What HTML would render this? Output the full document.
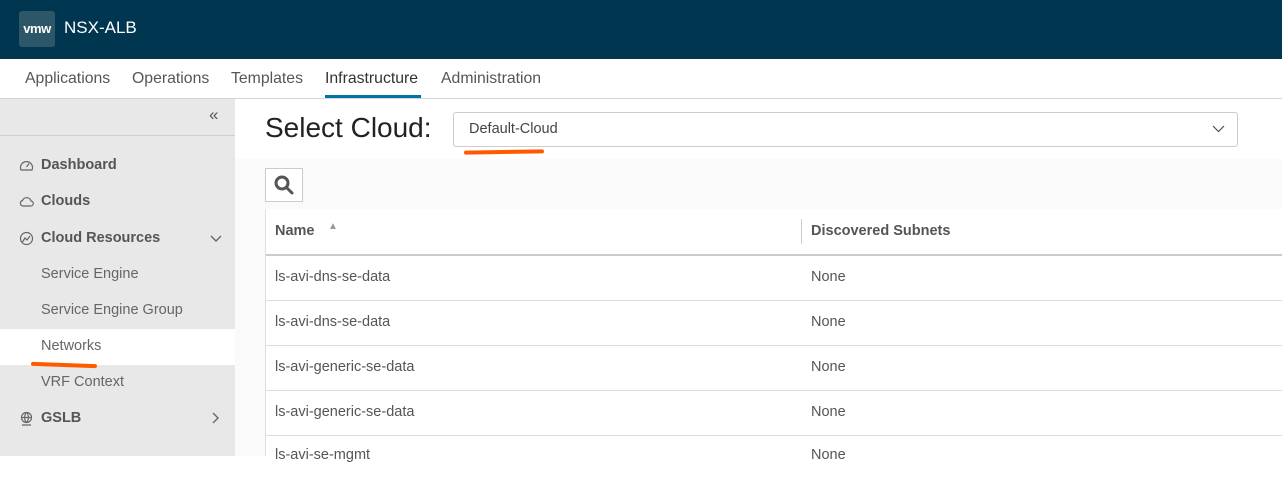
<!DOCTYPE html>
<html><head><style>
*{margin:0;padding:0;box-sizing:border-box}
body{width:1282px;height:456px;overflow:hidden;font-family:"Liberation Sans",sans-serif;background:#fff;position:relative}
.a{position:absolute}
.hdr{left:0;top:0;width:1282px;height:59px;background:#00364f}
.logo{left:19px;top:11px;width:36px;height:36px;background:#2c5769;border-radius:3px;color:#fff;font-weight:bold;font-size:13px;line-height:36px;text-align:center;letter-spacing:-0.5px}
.nav{top:59px;height:40px;left:0;width:1282px;border-bottom:1px solid #cfd6d9}
.nav span{position:absolute;top:11px;font-size:15.8px;color:#565656}
.side{left:0;top:99px;width:235px;height:357px;background:#e8e8e8}
.si{position:absolute;left:41px;font-size:14.5px;color:#666}
.sb{font-weight:bold;color:#555}
.main{left:235px;top:159px;width:1047px;height:297px;background:#fafafa}
.tbl{left:265px;top:209px;width:1017px;height:247px;background:#fff;border-left:1px solid #e0e0e0}
.row{position:absolute;left:0;width:1017px;border-bottom:1px solid #dcdcdc}
.row span{position:absolute;top:13px;font-size:14.5px;color:#555}
</style></head><body>
<div class="a hdr"></div>
<div class="a logo">vmw</div>
<div class="a" style="left:64px;top:18px;color:#fff;font-size:17px">NSX-ALB</div>
<div class="a nav">
<span style="left:25px">Applications</span>
<span style="left:132px">Operations</span>
<span style="left:231px">Templates</span>
<span style="left:325px;color:#333">Infrastructure</span>
<span style="left:441px">Administration</span>
<div style="position:absolute;left:325px;top:36px;width:96px;height:3px;background:#0072a3"></div>
</div>
<div class="a side">
<div style="position:absolute;left:0;top:36px;width:235px;height:1px;background:#cfcfcf"></div>
<div style="position:absolute;left:209px;top:6px;font-size:17px;color:#555">«</div>
<div style="position:absolute;left:0;top:230px;width:235px;height:36px;background:#fff"></div>
<svg style="position:absolute;left:19px;top:59px" width="15" height="15" viewBox="0 0 15 15" fill="none" stroke="#666" stroke-width="1.2"><path d="M2 12A6 6 0 1 1 13 12Z"/><path d="M7.5 9L10 5.5"/></svg>
<span class="si sb" style="top:58px">Dashboard</span>
<svg style="position:absolute;left:19px;top:95px" width="15" height="14" viewBox="0 0 15 14" fill="none" stroke="#666" stroke-width="1.2"><path d="M4 12H11.5A2.5 2.5 0 0 0 12 7A4.5 4.5 0 0 0 3.5 6.5A2.8 2.8 0 0 0 4 12Z"/></svg>
<span class="si sb" style="top:94px">Clouds</span>
<svg style="position:absolute;left:19px;top:132px" width="15" height="15" viewBox="0 0 15 15" fill="none" stroke="#666" stroke-width="1.2"><circle cx="7.5" cy="7.5" r="6"/><path d="M3.5 11L6 7L8 9L11 5"/></svg>
<span class="si sb" style="top:131px">Cloud Resources</span>
<svg style="position:absolute;left:210px;top:136px" width="12" height="8" viewBox="0 0 12 8" fill="none" stroke="#666" stroke-width="1.4"><path d="M1 1L6 6L11 1"/></svg>
<span class="si" style="top:167px">Service Engine</span>
<span class="si" style="top:203px">Service Engine Group</span>
<span class="si" style="top:239px">Networks</span>
<span class="si" style="top:275px">VRF Context</span>
<svg style="position:absolute;left:19px;top:312px" width="15" height="15" viewBox="0 0 15 15" fill="none" stroke="#666" stroke-width="1.2"><circle cx="7.5" cy="6.5" r="5"/><path d="M3 6.5H12M7.5 1.5C5 4 5 9 7.5 11.5M7.5 1.5C10 4 10 9 7.5 11.5M3 14H12"/></svg>
<span class="si sb" style="top:311px">GSLB</span>
<svg style="position:absolute;left:212px;top:313px" width="8" height="12" viewBox="0 0 8 12" fill="none" stroke="#666" stroke-width="1.4"><path d="M1 1L6 6L1 11"/></svg>
<div style="position:absolute;left:31px;top:264px;width:66px;height:4px;background:#ff5a00;border-radius:2px;transform:rotate(2deg)"></div>
</div>
<div class="a" style="left:265px;top:112px;font-size:28px;color:#222">Select Cloud:</div>
<div class="a" style="left:453px;top:112px;width:785px;height:35px;border:1px solid #ccc;border-radius:3px;background:#fff"></div>
<div class="a" style="left:469px;top:121px;font-size:14.5px;color:#444">Default-Cloud</div>
<svg class="a" style="left:1212px;top:125px" width="13" height="8" viewBox="0 0 13 8" fill="none" stroke="#555" stroke-width="1.2"><path d="M1 1L6.5 6.5L12 1"/></svg>
<div class="a" style="left:464px;top:150px;width:80px;height:4px;background:#ff5a00;border-radius:2px;transform:rotate(-1deg)"></div>
<div class="a main"></div>
<div class="a" style="left:265px;top:168px;width:38px;height:34px;border:1px solid #ccc;background:#fff"></div>
<svg class="a" style="left:273px;top:174px" width="22" height="22" viewBox="0 0 22 22" fill="none" stroke="#555" stroke-width="3"><circle cx="9" cy="9" r="6"/><path d="M13.5 13.5L19 19" stroke-linecap="round"/></svg>
<div class="a tbl">
<div class="row" style="top:0;height:47px;border-bottom:2px solid #ccc"><span style="left:9px;top:14px;font-weight:bold;color:#555">Name</span><span style="left:62px;top:12px;font-size:10px;color:#999">▲</span><div style="position:absolute;left:535px;top:10px;width:1px;height:25px;background:#ccc"></div><span style="left:545px;top:14px;font-weight:bold;color:#555">Discovered Subnets</span></div>
<div class="row" style="top:47px;height:45px"><span style="left:9px">ls-avi-dns-se-data</span><span style="left:545px">None</span></div>
<div class="row" style="top:92px;height:45px"><span style="left:9px">ls-avi-dns-se-data</span><span style="left:545px">None</span></div>
<div class="row" style="top:137px;height:45px"><span style="left:9px">ls-avi-generic-se-data</span><span style="left:545px">None</span></div>
<div class="row" style="top:182px;height:45px"><span style="left:9px">ls-avi-generic-se-data</span><span style="left:545px">None</span></div>
<div class="row" style="top:227px;height:45px;border:none"><span style="left:9px;top:11px">ls-avi-se-mgmt</span><span style="left:545px;top:11px">None</span></div>
</div>
</body></html>
